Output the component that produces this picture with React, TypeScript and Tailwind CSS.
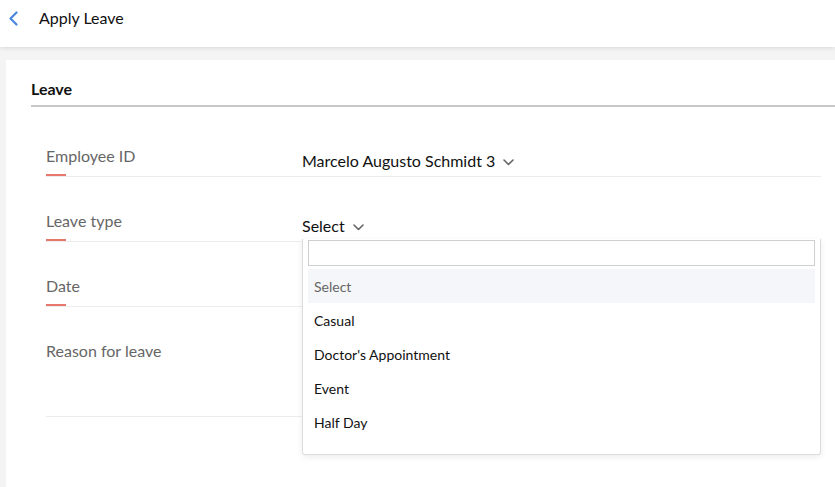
import React from "react";

const leaveTypes = ["Casual", "Doctor's Appointment", "Event", "Half Day"];

function Chevron() {
  return (
    <svg className="ml-[8px] mt-[2px]" width="11" height="7" viewBox="0 0 11 7" fill="none">
      <polyline points="1,1 5.5,5.5 10,1" stroke="#666" strokeWidth="1.6" strokeLinecap="round" strokeLinejoin="round" />
    </svg>
  );
}

function FieldRow({ label, children, marker = true, tall = false }: { label: string; children?: React.ReactNode; marker?: boolean; tall?: boolean }) {
  return (
    <div className={`flex border-b border-[#ececec] ${tall ? "h-[110px]" : "h-[65px]"}`}>
      <div className="w-[256px] pt-[34px] flex flex-col">
        <span className="text-[16px] leading-[20px] text-[#666]">{label}</span>
        {marker && <span className="mt-[8px] h-[2px] w-[20px] bg-[#e5776b]" />}
      </div>
      <div className="flex-1 pt-[39px]">{children}</div>
    </div>
  );
}

export default function App() {
  return (
    <div className="relative w-[835px] h-[487px] overflow-hidden bg-[#f4f4f4] flex flex-col" style={{ fontFamily: "Lato, 'Open Sans', sans-serif" }}>
      {/* header */}
      <div className="h-[47px] bg-white shadow-[0_1px_4px_rgba(0,0,0,0.12)] flex items-start z-10">
        <svg className="ml-[8px] mt-[11px]" width="11" height="15" viewBox="0 0 11 15" fill="none">
          <polyline points="8.5,1.5 2.5,7.5 8.5,13.5" stroke="#4a86e0" strokeWidth="2.2" strokeLinecap="round" strokeLinejoin="round" />
        </svg>
        <span className="ml-[20px] mt-[8px] text-[16px] leading-[20px] text-[#111]">Apply Leave</span>
      </div>

      {/* card */}
      <div className="flex-1 pt-[13px] pl-[6px]">
        <div className="h-full bg-white pl-[25px]">
          <div className="pt-[19px] pb-[6px] border-b-2 border-[#c8c8c8]">
            <span className="block text-[16px] leading-[20px] font-bold text-[#111]">Leave</span>
          </div>

          <div className="pl-[15px] pr-[14px] pt-[5px]">
            <FieldRow label="Employee ID">
              <div className="flex items-center text-[16px] leading-[20px] text-[#111]">
                Marcelo Augusto Schmidt 3
                <Chevron />
              </div>
            </FieldRow>
            <FieldRow label="Leave type">
              <div className="flex items-center text-[16px] leading-[20px] text-[#111]">
                Select
                <Chevron />
              </div>
            </FieldRow>
            <FieldRow label="Date" />
            <FieldRow label="Reason for leave" marker={false} tall />
          </div>
        </div>
      </div>

      {/* leave type dropdown */}
      <div className="absolute left-[302px] top-[239px] w-[519px] h-[216px] bg-white border border-t-0 border-[#dcdcdc] rounded-b-[3px] shadow-[0_2px_6px_rgba(0,0,0,0.08)] px-[5px] pt-[1px]">
        <div className="h-[26px] border border-[#cfcfcf] bg-white" />
        <div className="mt-[3px] h-[34px] bg-[#f5f6f9] flex items-center pl-[6px] text-[14px] text-[#666]">Select</div>
        {leaveTypes.map((t) => (
          <div key={t} className="h-[34px] flex items-center pl-[6px] text-[14px] text-[#111]">
            {t}
          </div>
        ))}
      </div>
    </div>
  );
}
